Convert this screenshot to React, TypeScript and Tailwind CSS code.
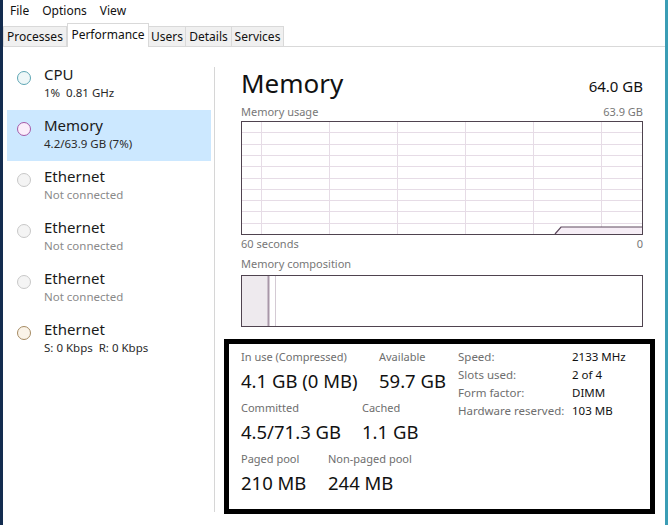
import React from "react";

const font = { fontFamily: '"Noto Sans", "Open Sans", sans-serif' };

function Circle({ border, fill }: { border: string; fill: string }) {
  return (
    <div
      className="w-[14px] h-[14px] rounded-full border-[1.5px] shrink-0 mt-[12px]"
      style={{ borderColor: border, backgroundColor: fill }}
    />
  );
}

type Item = { title: string; sub: string; border: string; fill: string; subDim?: boolean; selected?: boolean };

const items: Item[] = [
  { title: "CPU", sub: "1%  0.81 GHz", border: "#5ea6b4", fill: "#eef7f8" },
  { title: "Memory", sub: "4.2/63.9 GB (7%)", border: "#a45aa8", fill: "#fbeefb", selected: true },
  { title: "Ethernet", sub: "Not connected", border: "#c8c8c8", fill: "#f4f4f4", subDim: true },
  { title: "Ethernet", sub: "Not connected", border: "#c8c8c8", fill: "#f4f4f4", subDim: true },
  { title: "Ethernet", sub: "Not connected", border: "#c8c8c8", fill: "#f4f4f4", subDim: true },
  { title: "Ethernet", sub: "S: 0 Kbps  R: 0 Kbps", border: "#a58a62", fill: "#faf3e8" },
];

const tabs = [
  { label: "Processes", w: "w-[64px]" },
  { label: "Performance", w: "w-[82px]", active: true },
  { label: "Users", w: "w-[38px]" },
  { label: "Details", w: "w-[47px]" },
  { label: "Services", w: "w-[53px]" },
];

function UsageGraph() {
  const vx = [20, 88, 156, 224, 292, 360];
  const hy = [1, 2, 3, 4, 5, 6, 7, 8, 9].map((k) => k * 11.3);
  return (
    <svg width="402" height="114" viewBox="0 0 402 114" className="block">
      {vx.map((x) => (
        <line key={x} x1={x + 0.5} y1="0" x2={x + 0.5} y2="114" stroke="#e6dce6" strokeWidth="1" />
      ))}
      {hy.map((y) => (
        <line key={y} x1="0" y1={Math.round(y) + 0.5} x2="402" y2={Math.round(y) + 0.5} stroke="#e6dce6" strokeWidth="1" />
      ))}
      <polygon points="314,113 320,106 401,106 401,113" fill="#f6eef6" />
      <polyline points="314,113 320,106 401,106" fill="none" stroke="#5e4a5e" strokeWidth="1.2" />
      <rect x="0.5" y="0.5" width="401" height="113" fill="none" stroke="#4f434f" strokeWidth="1" />
    </svg>
  );
}

function CompositionBar() {
  return (
    <svg width="402" height="52" viewBox="0 0 402 52" className="block">
      <rect x="0" y="0" width="27" height="52" fill="#eeeaee" />
      <line x1="27.5" y1="0" x2="27.5" y2="52" stroke="#a897a8" strokeWidth="2" />
      <line x1="34.5" y1="0" x2="34.5" y2="52" stroke="#d4cad4" strokeWidth="1" />
      <rect x="0.5" y="0.5" width="401" height="51" fill="none" stroke="#4f434f" strokeWidth="1" />
    </svg>
  );
}

function Stat({ label, value, w }: { label: string; value: string; w: string }) {
  return (
    <div className={`${w} shrink-0`}>
      <div className="text-[11px] leading-[15px] text-[#6e6e6e] whitespace-nowrap">{label}</div>
      <div className="text-[18.5px] leading-[28px] mt-[3px] text-[#111] whitespace-nowrap">{value}</div>
    </div>
  );
}

export default function App() {
  return (
    <div className="w-[668px] h-[525px] bg-white flex overflow-hidden" style={font}>
      <div className="w-[3px] bg-[#132c4f] shrink-0" />
      <div className="flex-1 flex flex-col min-w-0">
        {/* menu bar */}
        <div className="h-[22px] flex items-center pl-[7px] gap-[13px] text-[12px] text-[#111]">
          <span>File</span>
          <span>Options</span>
          <span>View</span>
        </div>
        {/* tabs */}
        <div className="h-[25px] flex items-end border-b border-[#d9d9d9]">
          {tabs.map((t) =>
            t.active ? (
              <div
                key={t.label}
                className={`${t.w} h-[24px] bg-white border border-b-0 border-[#d9d9d9] -mb-px relative flex items-center justify-center text-[12px] text-[#111] pb-[2px]`}
              >
                {t.label}
              </div>
            ) : (
              <div
                key={t.label}
                className={`${t.w} h-[20px] bg-[#f0f0f0] border border-b-0 border-[#d9d9d9] -ml-px first:ml-0 flex items-center justify-center text-[12px] text-[#111]`}
              >
                {t.label}
              </div>
            )
          )}
        </div>
        {/* content */}
        <div className="flex-1 flex min-h-0">
          {/* left list */}
          <div className="w-[211px] shrink-0 pt-[12px] pl-[4px]">
            {items.map((it, i) => (
              <div
                key={i}
                className={`w-[204px] h-[51px] flex pl-[10px] gap-[13px] ${it.selected ? "bg-[#cce8ff]" : ""}`}
              >
                <Circle border={it.border} fill={it.fill} />
                <div className="pt-[6px]">
                  <div className="text-[15px] leading-[19px] text-[#1a1a1a]">{it.title}</div>
                  <div className={`text-[11.5px] leading-[17px] whitespace-pre ${it.subDim ? "text-[#8a8a8a]" : "text-[#2a2a2a]"}`}>
                    {it.sub}
                  </div>
                </div>
              </div>
            ))}
          </div>
          {/* separator */}
          <div className="w-px bg-[#d6d6d6] mt-[20px] mb-[13px] shrink-0" />
          {/* right panel */}
          <div className="flex-1 flex flex-col pl-[9px] pr-[11px]">
            <div className="pl-[17px] pr-[12px]">
              <div className="flex items-end justify-between mt-[20px] h-[32px]">
                <div className="text-[26px] leading-[32px] text-[#111]">Memory</div>
                <div className="text-[15px] leading-[20px] text-[#111] mb-[3px]">64.0 GB</div>
              </div>
              <div className="flex justify-between text-[11px] leading-[14px] text-[#777] mt-[6px]">
                <span>Memory usage</span>
                <span>63.9 GB</span>
              </div>
              <div className="mt-[2px]">
                <UsageGraph />
              </div>
              <div className="flex justify-between text-[11px] leading-[14px] text-[#777] mt-[2px]">
                <span>60 seconds</span>
                <span>0</span>
              </div>
              <div className="text-[11px] leading-[14px] text-[#777] mt-[6px]">Memory composition</div>
              <div className="mt-[4px]">
                <CompositionBar />
              </div>
            </div>
            {/* stats box */}
            <div className="mt-[12px] h-[175px] border-[5px] border-black pl-[12px] pt-[5px] flex items-start">
              <div className="w-[217px] shrink-0 flex flex-col gap-[5px]">
                <div className="flex">
                  <Stat label="In use (Compressed)" value="4.1 GB (0 MB)" w="w-[138px]" />
                  <Stat label="Available" value="59.7 GB" w="w-[79px]" />
                </div>
                <div className="flex">
                  <Stat label="Committed" value="4.5/71.3 GB" w="w-[121px]" />
                  <Stat label="Cached" value="1.1 GB" w="w-[90px]" />
                </div>
                <div className="flex">
                  <Stat label="Paged pool" value="210 MB" w="w-[87px]" />
                  <Stat label="Non-paged pool" value="244 MB" w="w-[120px]" />
                </div>
              </div>
              <div className="grid grid-cols-[114px_auto] text-[11.5px] leading-[18px] -mt-[1px]">
                <span className="text-[#6e6e6e]">Speed:</span>
                <span className="text-[#111]">2133 MHz</span>
                <span className="text-[#6e6e6e]">Slots used:</span>
                <span className="text-[#111]">2 of 4</span>
                <span className="text-[#6e6e6e]">Form factor:</span>
                <span className="text-[#111]">DIMM</span>
                <span className="text-[#6e6e6e]">Hardware reserved:</span>
                <span className="text-[#111]">103 MB</span>
              </div>
            </div>
          </div>
        </div>
      </div>
      <div className="w-[3px] bg-[#3b9db5] shrink-0" />
    </div>
  );
}
